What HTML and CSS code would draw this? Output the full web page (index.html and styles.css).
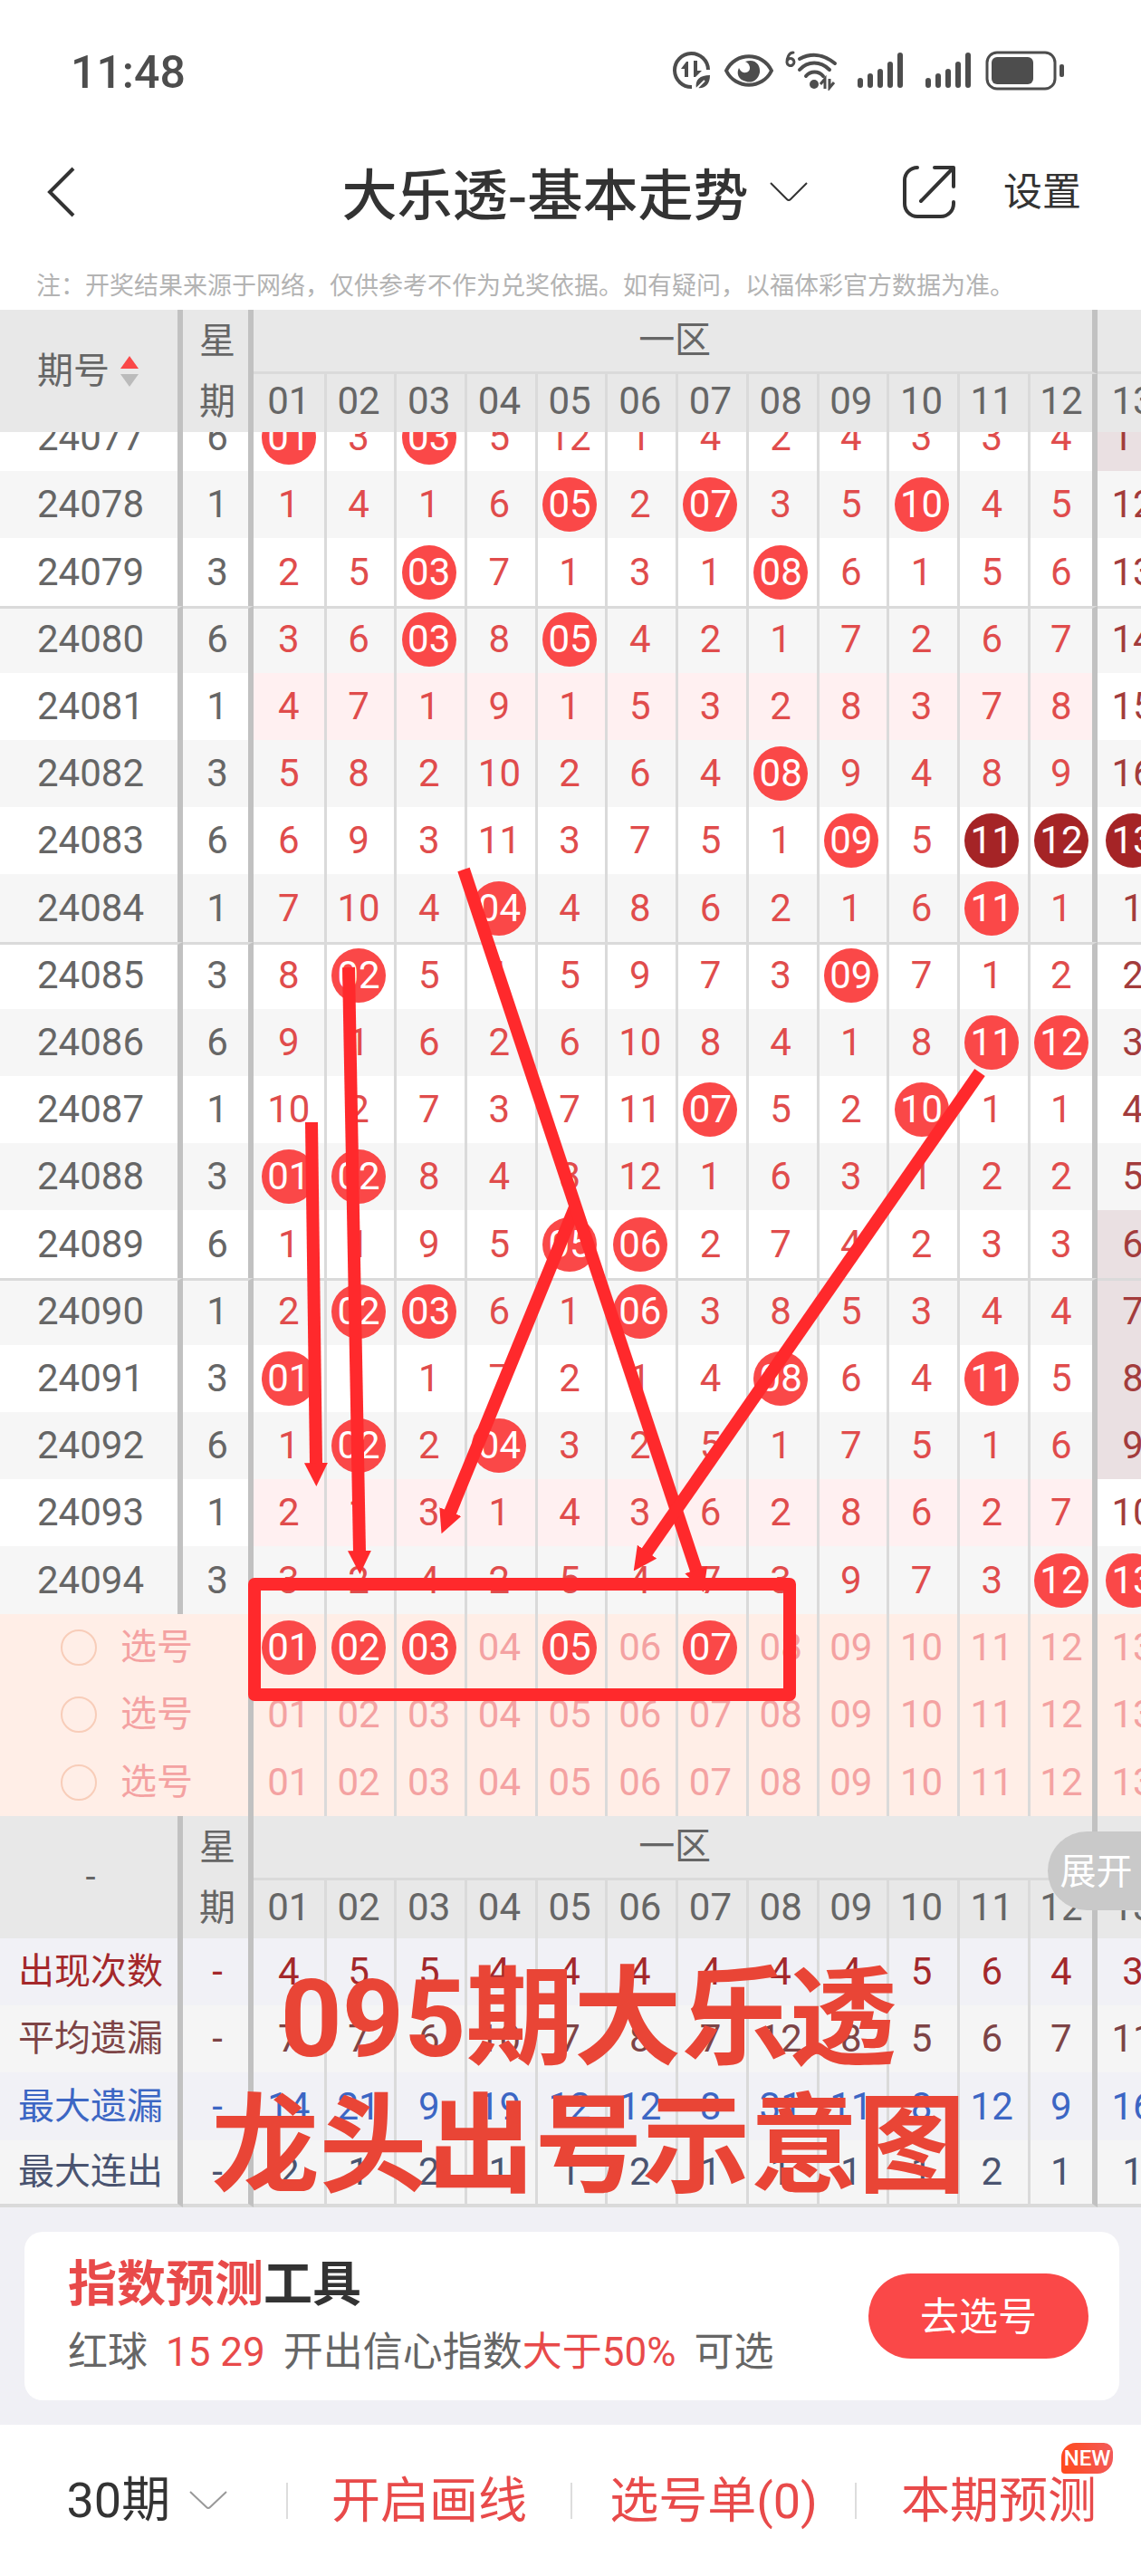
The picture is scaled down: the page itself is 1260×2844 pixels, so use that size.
FILE: index.html
```html
<!DOCTYPE html>
<html lang="zh-CN">
<head>
  <meta charset="UTF-8" />
  <meta name="viewport" content="width=device-width, initial-scale=1" />
  <title>大乐透-基本走势</title>
  <link rel="stylesheet" href="styles.css">
</head>
<body>

  <div class="status-bar">
    <span class="time">11:48</span>
    <div class="status-icons">
      <svg width="44" height="44" viewBox="0 0 44 44" fill="none" stroke="#4d4d4d" stroke-width="4">
        <path d="M39 21A18.500 18.500 0 1 0 21 40" />
        <path d="M17 29V12H15L9 20H13V29Z" fill="#4d4d4d" stroke="none" />
        <path d="M23 11H27V22H32L25 29H23Z" fill="#4d4d4d" stroke="none" />
        <path d="M26 42C24 32 30 27 41 27C41 37 36 42 27 41Z" fill="#4d4d4d" stroke="none" />
        <path d="M25 43L35 33" stroke="#fff" stroke-width="2" />
      </svg>
      <svg width="54" height="44" viewBox="0 0 54 44">
        <path d="M2 22C12 1 42 1 52 22C42 43 12 43 2 22Z" fill="none" stroke="#4d4d4d" stroke-width="4" />
        <path d="M23 12C34 8 40 16 39 24C37 33 30 36 24 34C15 32 13 25 16 19C19 27 29 25 28 18C27 14 25 13 23 12Z" fill="#4d4d4d" />
      </svg>
      <svg width="66" height="44" viewBox="0 0 66 44" fill="none" stroke="#4d4d4d" stroke-width="4" stroke-linecap="round">
        <path d="M9 2C4 2 2 8 2 13A4 4 0 1 0 2 12" stroke-width="3" />
        <path d="M16 9C29 2 43 4 55 14" />
        <path d="M16 21C25 11 39 11 49 21" />
        <path d="M23 28C28 22 37 22 42 28" />
        <circle cx="32" cy="37" r="5" fill="#4d4d4d" stroke="none" />
        <path d="M39 37L44 31V42M49 31V41L54 35" stroke-width="3" stroke-linecap="butt" />
      </svg>
      <svg width="62" height="44" viewBox="0 0 62 44" stroke="#4d4d4d" stroke-width="6" stroke-linecap="round">
        <path d="M4 33V38M15 28V38M26 23V38M37 15V38M48 5V38" />
      </svg>
      <svg width="54" height="44" viewBox="0 0 54 44" stroke="#4d4d4d" stroke-width="6" stroke-linecap="round">
        <path d="M4 33V38M15 28V38M26 23V38M37 15V38M48 5V38" />
      </svg>
      <svg width="88" height="44" viewBox="0 0 88 44">
        <rect x="2" y="2" width="75" height="40" rx="11" fill="none" stroke="#4d4d4d" stroke-width="3" />
        <rect x="7" y="7" width="46" height="30" rx="6" fill="#4d4d4d" />
        <rect x="82" y="15" width="5" height="14" rx="2" fill="#4d4d4d" />
      </svg>
    </div>
  </div>

  <header class="nav">
    <button class="back" aria-label="返回">
      <svg width="34" height="56" viewBox="0 0 34 56" fill="none" stroke="#333" stroke-width="4"><path d="M31 2L5 28L31 54" /></svg>
    </button>
    <h1>
      <button class="title">
        大乐透-基本走势
        <svg width="42" height="24" viewBox="0 0 42 24" fill="none" stroke="#333" stroke-width="2"><path d="M1 2L19 20Q21 22 23 20L41 2" /></svg>
      </button>
    </h1>
    <div class="nav-actions">
      <button aria-label="分享">
        <svg width="60" height="60" viewBox="0 0 60 60" fill="none" stroke="#333" stroke-width="4" stroke-linecap="round" stroke-linejoin="round">
          <path d="M17 3A14 14 0 0 0 3 17V43A14 14 0 0 0 17 57H43A14 14 0 0 0 57 43V41" />
          <path d="M36 3H57V24M56 4L21 40" />
        </svg>
      </button>
      <button class="settings">设置</button>
    </div>
  </header>

  <p class="note">注：开奖结果来源于网络，仅供参考不作为兑奖依据。如有疑问，以福体彩官方数据为准。</p>

  <main class="chart">
    <table>
      <colgroup>
        <col class="col-issue"><col class="col-week"><col span="13">
      </colgroup>
      <thead>
        <tr class="zone-row">
          <th class="issue" rowspan="2">
            <div class="sort">期号
              <svg width="20" height="34" viewBox="0 0 20 34"><path d="M10 0L20 14H0Z" fill="#fa4848" /><path d="M10 34L20 20H0Z" fill="#bbb" /></svg>
            </div>
          </th>
          <th class="week" rowspan="2">星<br>期</th>
          <th class="zone" colspan="12">一区</th>
          <th class="zone"></th>
        </tr>
        <tr class="num-row"></tr>
      </thead>
      <tbody id="draws"></tbody>
      <tbody id="picks"></tbody>
      <tbody class="head-again">
        <tr class="zone-row">
          <th class="issue" rowspan="2">-</th>
          <th class="week" rowspan="2">星<br>期</th>
          <th class="zone" colspan="12">一区</th>
          <th class="zone"></th>
        </tr>
        <tr class="num-row"></tr>
      </tbody>
      <tbody id="stats"></tbody>
    </table>

    <button class="expand">展开</button>

    <svg class="lines" viewBox="0 342 1260 2095" preserveAspectRatio="none" fill="none" stroke="#ff292c" stroke-width="14">
      <defs>
        <marker id="head" markerUnits="userSpaceOnUse" markerWidth="26" markerHeight="26" refX="1" refY="13" orient="auto">
          <path d="M0 0L26 13L0 26Z" fill="#ff292c" stroke="none" />
        </marker>
      </defs>
      <path d="M344 1239L349 1616" marker-end="url(#head)" />
      <path d="M385 1068L397 1713" marker-end="url(#head)" />
      <path d="M635 1333L497 1670" marker-end="url(#head)" />
      <path d="M512 960L769 1734" marker-end="url(#head)" />
      <path d="M1082 1184L714 1714" marker-end="url(#head)" />
      <rect x="281" y="1749" width="591" height="122" stroke-linejoin="round" />
    </svg>

    <p class="caption">095期大乐透<br>龙头出号示意图</p>
  </main>

  <section class="promo">
    <div class="card">
      <div>
        <h2><em>指数预测</em>工具</h2>
        <p>红球<em class="balls">15 29</em>开出信心指数<em class="rate">大于50%</em>可选</p>
      </div>
      <button class="go">去选号</button>
    </div>
  </section>

  <footer class="toolbar">
    <div class="tool period">
      <select aria-label="期数">
        <option>30期</option>
        <option>50期</option>
      </select>
      <svg width="42" height="22" viewBox="0 0 42 22" fill="none" stroke="#999" stroke-width="2"><path d="M1 1L19 18Q21 20 23 18L41 1" /></svg>
    </div>
    <button class="tool">开启画线</button>
    <button class="tool">选号单(0)</button>
    <button class="tool"><span class="label">本期预测<span class="new">NEW</span></span></button>
  </footer>

  <script src="script.js"></script>
</body>
</html>
```

FILE: styles.css
```css
* {
  box-sizing: border-box;
}

body {
  margin: 0;
  font-family: Roboto, 'Noto Sans CJK SC', sans-serif;
  background: #fff;
  color: #333;
}

button, select {
  margin: 0;
  padding: 0;
  border: none;
  background: none;
  font: inherit;
  color: inherit;
  cursor: pointer;
}

svg {
  display: block;
  flex: none;
}

em {
  font-style: normal;
  color: #e84a4a;
}

/* status bar + nav */
.status-bar {
  display: flex;
  justify-content: space-between;
  align-items: center;
  height: 156px;
  padding: 0 84px 0 78px;
}

.time {
  padding-top: 4px;
  font-size: 50px;
  font-weight: 500;
  color: #4d4d4d;
}

.status-icons {
  display: flex;
  gap: 13px;
}

.nav {
  display: grid;
  grid-template-columns: 1fr auto 1fr;
  align-items: center;
  height: 108px;
  padding: 4px 66px 0 50px;
}

.nav h1 {
  margin: 0;
  padding-left: 26px;
  font-family: 'Noto Sans CJK SC', sans-serif;
  font-size: 61px;
  font-weight: 500;
  line-height: 80px;
}

.title {
  display: flex;
  align-items: center;
  gap: 24px;
}

.nav-actions {
  display: flex;
  justify-content: flex-end;
  align-items: center;
  gap: 52px;
}

.settings {
  font-size: 43px;
  line-height: 60px;
}

.note {
  margin: 0;
  padding: 32px 40px 6px;
  font-size: 27px;
  line-height: 40px;
  color: #b3b3b3;
}

/* trend table */
.chart {
  position: relative;
  overflow: hidden;
}

table {
  width: calc(100% + 30px);
  table-layout: fixed;
  border-spacing: 0;
  font-size: 42px;
  line-height: 60px;
}

.col-issue {
  width: 202px;
}

.col-week {
  width: 78px;
}

th, td {
  height: 74px;
  padding: 0;
  font-weight: 400;
  text-align: center;
  white-space: nowrap;
}

th {
  background: #e8e8e8;
  color: #666;
}

.issue, .week {
  padding-left: 4px;
  border-right: 6px solid #c1c1c1;
  color: #666;
}

.n {
  padding-right: 4px;
  border-left: 3px solid #dadada;
}

.n:nth-last-child(13) {
  padding-right: 0;
  border-left: none;
}

.n:nth-last-child(2) {
  padding-right: 0;
  border-right: 6px solid #c1c1c1;
}

.n:last-child {
  padding-right: 0;
  border-left: none;
}

th.issue, th.week, th.zone {
  font-size: 40px;
}

th.week {
  line-height: 67px;
}

.zone {
  height: 71px;
  padding-left: 4px;
  border-bottom: 3px solid #dadada;
  border-right: 6px solid #c1c1c1;
}

.zone:last-child {
  border-right: none;
}

.num-row th {
  height: 64px;
  padding-bottom: 4px;
}

.sort {
  display: flex;
  justify-content: center;
  align-items: center;
  gap: 12px;
  padding-right: 6px;
}

#draws td {
  color: #e04c4c;
}

#draws .issue, #draws .week {
  color: #666;
}

#draws .n:last-child {
  color: #a33c3c;
}

#draws tr:nth-child(even) {
  background: #f6f6f6;
}

#draws tr:nth-child(5n + 3) td {
  height: 75px;
}

#draws tr:nth-child(5n + 4) td {
  padding-bottom: 3px;
  border-top: 3px solid #dadada;
}

#draws .blank .n:not(:last-child) {
  background: #fff0f1;
}

#draws .cold .n:last-child {
  background: #eae0e2;
}

/* first row is half scrolled under the header */
#draws tr:first-child td {
  height: 43px;
}

.cut {
  display: flex;
  flex-direction: column;
  justify-content: flex-end;
  align-items: center;
  height: 43px;
  padding-bottom: 7px;
  overflow: hidden;
}

.ball {
  display: block;
  width: 60px;
  height: 60px;
  margin: 0 auto;
  border-radius: 50%;
  background: #fa4848;
  color: #fff;
  line-height: 60px;
}

.cut .ball, .cut span {
  flex: none;
  margin: 0;
}

.ball.streak {
  background: #a52426;
}

#picks tr {
  background: #ffeee7;
}

#picks td {
  color: #f4a2a2;
}

#picks tr:last-child td {
  height: 75px;
}

.pick {
  border-right: 6px solid #c1c1c1;
  font-size: 40px;
}

.pick label {
  display: flex;
  justify-content: center;
  align-items: center;
  gap: 26px;
  padding-left: 6px;
}

.pick input {
  appearance: none;
  width: 40px;
  height: 40px;
  margin: 0;
  border: 2px solid #f8cdb9;
  border-radius: 50%;
}

#picks button {
  display: block;
  width: 60px;
  height: 60px;
  margin: 0 auto;
}

#picks .ball {
  background: #fa4848;
  color: #fff;
}

#stats tr {
  background: #f5f5f5;
}

#stats tr:nth-child(odd) {
  background: #f1f1f6;
}

#stats tr:nth-child(3) td {
  height: 75px;
}

#stats tr:last-child td {
  border-bottom: 4px solid #dadada;
}

#stats .issue {
  font-size: 40px;
}

#stats .times td {
  color: #a4282b;
}

#stats .avg td {
  color: #7d4446;
}

#stats .max td {
  color: #3c66c4;
}

#stats .run td {
  color: #4a5470;
}

/* overlays on the chart */
.expand {
  position: absolute;
  right: 0;
  bottom: 328px;
  width: 103px;
  height: 87px;
  padding: 0 0 6px 4px;
  border-radius: 44px 0 0 44px;
  background: #c9c9c9;
  color: #fff;
  font-size: 40px;
}

.lines {
  position: absolute;
  inset: 0;
  width: 100%;
  height: 100%;
}

.caption {
  position: absolute;
  left: 0;
  right: 0;
  bottom: -4px;
  margin: 0;
  padding-left: 40px;
  font-size: 119px;
  font-weight: 700;
  line-height: 141px;
  text-align: center;
  color: #e94536;
}

/* promo card */
.promo {
  padding: 27px 24px 27px 27px;
  background: #f0f0f5;
}

.card {
  display: flex;
  justify-content: space-between;
  align-items: center;
  height: 186px;
  padding: 0 34px 0 48px;
  border-radius: 20px;
  background: #fff;
}

.card h2 {
  margin: 0;
  padding-top: 6px;
  font-size: 54px;
  font-weight: 700;
  line-height: 74px;
}

.card p {
  margin: 0;
  font-size: 44px;
  line-height: 74px;
  color: #666;
}

.balls {
  margin: 0 20px;
}

.rate {
  margin-right: 20px;
}

.go {
  width: 243px;
  height: 94px;
  padding-bottom: 6px;
  border-radius: 47px;
  background: #fa4848;
  color: #fff;
  font-size: 43px;
}

/* bottom toolbar */
.toolbar {
  display: grid;
  grid-template-columns: repeat(4, 1fr);
  align-items: center;
  height: 167px;
  padding-left: 4px;
  font-size: 54px;
}

.tool {
  display: flex;
  justify-content: center;
  align-items: center;
  height: 40px;
  padding-bottom: 8px;
  border-right: 2px solid #ddd;
  color: #e84a4a;
}

.tool:last-child {
  border-right: none;
}

.period {
  gap: 20px;
  padding: 0 0 0 4px;
  color: #333;
}

.period select {
  appearance: none;
  line-height: 74px;
}

.label {
  position: relative;
}

.new {
  position: absolute;
  right: -18px;
  top: -20px;
  width: 57px;
  height: 34px;
  border-radius: 16px 10px 17px 4px;
  background: linear-gradient(90deg, #ff4a1c, #f25a5a);
  color: #fff;
  font-size: 24px;
  font-weight: 500;
  line-height: 34px;
  text-align: center;
}
```

FILE: script.js
```js
// * = drawn number, # = drawn as part of a streak
const draws = [
  ['24077', 6, '*01 3 *03 5 12 1 4 2 4 3 3 4 11', 'cold'],
  ['24078', 1, '1 4 1 6 *05 2 *07 3 5 *10 4 5 12'],
  ['24079', 3, '2 5 *03 7 1 3 1 *08 6 1 5 6 13'],
  ['24080', 6, '3 6 *03 8 *05 4 2 1 7 2 6 7 14'],
  ['24081', 1, '4 7 1 9 1 5 3 2 8 3 7 8 15', 'blank'],
  ['24082', 3, '5 8 2 10 2 6 4 *08 9 4 8 9 16'],
  ['24083', 6, '6 9 3 11 3 7 5 1 *09 5 #11 #12 #13'],
  ['24084', 1, '7 10 4 *04 4 8 6 2 1 6 *11 1 1'],
  ['24085', 3, '8 *02 5 1 5 9 7 3 *09 7 1 2 2'],
  ['24086', 6, '9 1 6 2 6 10 8 4 1 8 *11 *12 3'],
  ['24087', 1, '10 2 7 3 7 11 *07 5 2 *10 1 1 4'],
  ['24088', 3, '*01 *02 8 4 8 12 1 6 3 1 2 2 5'],
  ['24089', 6, '1 1 9 5 *05 *06 2 7 4 2 3 3 6', 'cold'],
  ['24090', 1, '2 *02 *03 6 1 *06 3 8 5 3 4 4 7', 'cold'],
  ['24091', 3, '*01 1 1 7 2 1 4 *08 6 4 *11 5 8', 'cold'],
  ['24092', 6, '1 *02 2 *04 3 2 5 1 7 5 1 6 9', 'cold'],
  ['24093', 1, '2 1 3 1 4 3 6 2 8 6 2 7 10', 'blank'],
  ['24094', 3, '3 2 4 2 5 4 7 3 9 7 3 *12 *13']
];

const stats = [
  ['出现次数', 'times', '4 5 5 4 4 4 4 4 4 5 6 4 3'],
  ['平均遗漏', 'avg', '7 7 6 10 7 8 7 12 8 5 6 7 11'],
  ['最大遗漏', 'max', '14 21 9 19 12 12 8 31 11 8 12 9 16'],
  ['最大连出', 'run', '2 1 2 1 1 2 1 1 1 1 2 1 1']
];

const picked = [['01', '02', '03', '05', '07'], [], []];

const numbers = Array.from({ length: 13 }, (_, i) => String(i + 1).padStart(2, '0'));

function mark(text) {
  if (text[0] === '*') return `<span class="ball">${text.slice(1)}</span>`;
  if (text[0] === '#') return `<span class="ball streak">${text.slice(1)}</span>`;
  return `<span>${text}</span>`;
}

document.querySelectorAll('.num-row').forEach(row => {
  row.innerHTML = numbers.map(n => `<th class="n">${n}</th>`).join('');
});

document.getElementById('draws').innerHTML = draws.map(([issue, week, cells, type], i) => {
  const wrap = html => i === 0 ? `<div class="cut">${html}</div>` : html;
  return `<tr class="${type || ''}">
    <td class="issue">${wrap(mark(issue))}</td>
    <td class="week">${wrap(mark(String(week)))}</td>
    ${cells.split(' ').map(c => `<td class="n">${wrap(mark(c))}</td>`).join('')}
  </tr>`;
}).join('');

document.getElementById('picks').innerHTML = picked.map(list => `<tr>
  <td class="pick" colspan="2"><label><input type="radio" name="pick">选号</label></td>
  ${numbers.map(n => `<td class="n"><button class="${list.includes(n) ? 'ball' : ''}">${n}</button></td>`).join('')}
</tr>`).join('');

document.getElementById('stats').innerHTML = stats.map(([name, type, cells]) => `<tr class="${type}">
  <td class="issue">${name}</td>
  <td class="week">-</td>
  ${cells.split(' ').map(c => `<td class="n">${c}</td>`).join('')}
</tr>`).join('');

document.getElementById('picks').addEventListener('click', function (e) {
  if (e.target.tagName === 'BUTTON') {
    e.target.classList.toggle('ball');
  }
});
```
